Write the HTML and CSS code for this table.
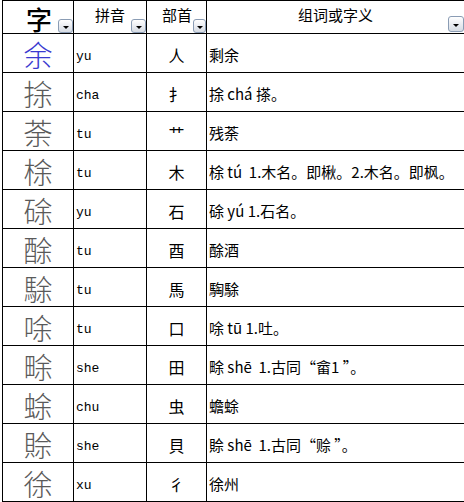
FILE: index.html
```html
<!DOCTYPE html>
<html lang="zh">
<head>
<meta charset="utf-8">
<link rel="stylesheet" href="styles.css">
</head>
<body>
<div class="sheet">
  <div class="hd c1"><span class="hz">字</span><span class="dd"></span></div>
  <div class="hd c2"><span>拼音</span><span class="dd"></span></div>
  <div class="hd c3"><span>部首</span><span class="dd narrow"></span></div>
  <div class="hd c4"><span>组词或字义</span><span class="dd high"></span></div>

  <div class="ch blue">余</div><div class="py">yu</div><div class="rad">人</div><div class="mean">剩余</div>
  <div class="ch">捈</div><div class="py">cha</div><div class="rad">扌</div><div class="mean">捈 chá 搽。</div>
  <div class="ch">荼</div><div class="py">tu</div><div class="rad">艹</div><div class="mean">残荼</div>
  <div class="ch">梌</div><div class="py">tu</div><div class="rad">木</div><div class="mean">梌 tú&nbsp; 1.木名。即楸。2.木名。即枫。</div>
  <div class="ch">硢</div><div class="py">yu</div><div class="rad">石</div><div class="mean">硢 yú 1.石名。</div>
  <div class="ch">酴</div><div class="py">tu</div><div class="rad">酉</div><div class="mean">酴酒</div>
  <div class="ch">駼</div><div class="py">tu</div><div class="rad">馬</div><div class="mean">騊駼</div>
  <div class="ch">唋</div><div class="py">tu</div><div class="rad">口</div><div class="mean">唋 tū 1.吐。</div>
  <div class="ch">畭</div><div class="py">she</div><div class="rad">田</div><div class="mean">畭 shē&nbsp; 1.古同“畲1 ”。</div>
  <div class="ch">蜍</div><div class="py">chu</div><div class="rad">虫</div><div class="mean">蟾蜍</div>
  <div class="ch">賒</div><div class="py">she</div><div class="rad">貝</div><div class="mean">賒 shē&nbsp; 1.古同“赊 ”。</div>
  <div class="ch">徐</div><div class="py">xu</div><div class="rad">彳</div><div class="mean">徐州</div>
</div>
</body>
</html>
```
FILE: styles.css
```css
html, body {
  margin: 0;
  padding: 0;
  background: #fff;
}
body {
  font-family: "Noto Sans CJK SC", sans-serif;
  color: #000;
}
.sheet {
  margin-left: 2px;
  display: grid;
  grid-template-columns: 71px 73px 60px 1fr;
  grid-template-rows: 33px repeat(12, 39px);
  border-left: 1px solid #000;
  border-top: 1px solid #000;
}
.sheet > div {
  border-right: 1px solid #000;
  border-bottom: 1px solid #000;
  display: flex;
  align-items: center;
  white-space: nowrap;
  box-sizing: border-box;
  min-width: 0;
}
.sheet > .c4, .sheet > .mean {
  border-right: none;
}
.hd {
  position: relative;
  justify-content: center;
  font-size: 15px;
  line-height: 18px;
  padding-bottom: 4px;
}
.sheet > .c1 {
  padding-bottom: 1px;
}
.hd .hz {
  align-self: flex-end;
  font-size: 26px;
  line-height: 26px;
  font-weight: 500;
  margin-left: 2px;
}
.c3 span:first-child { margin-left: 1px; }
.dd {
  position: absolute;
  right: 0;
  bottom: 0;
  width: 15px;
  height: 14px;
  box-sizing: border-box;
  border: 1px solid #8a9cb4;
  border-radius: 3px;
  background: linear-gradient(#ffffff, #e6e9ef 60%, #d6dbe3);
}
.dd::after {
  content: "";
  position: absolute;
  left: 50%;
  top: 6px;
  margin-left: -3px;
  border-left: 3px solid transparent;
  border-right: 3px solid transparent;
  border-top: 3px solid #000;
}
.dd.narrow { width: 13px; }
.dd.high { bottom: 1px; right: 0; height: 16px; width: 16px; }
.dd.high::after { top: 7px; }
.ch {
  justify-content: center;
  font-size: 29px;
  font-weight: 300;
  color: #5a5a5a;
  line-height: 32px;
  padding-top: 1px;
}
.ch.blue { color: #3a3ad0; }
.py {
  font-family: "Liberation Mono", "DejaVu Sans Mono", monospace;
  font-size: 13px;
  line-height: 16px;
  padding-left: 2px;
  padding-top: 8px;
}
.rad {
  justify-content: center;
  font-size: 16px;
  line-height: 20px;
  padding-top: 3px;
}
.mean {
  font-size: 15px;
  line-height: 20px;
  padding-left: 2px;
  padding-top: 3px;
}
```
